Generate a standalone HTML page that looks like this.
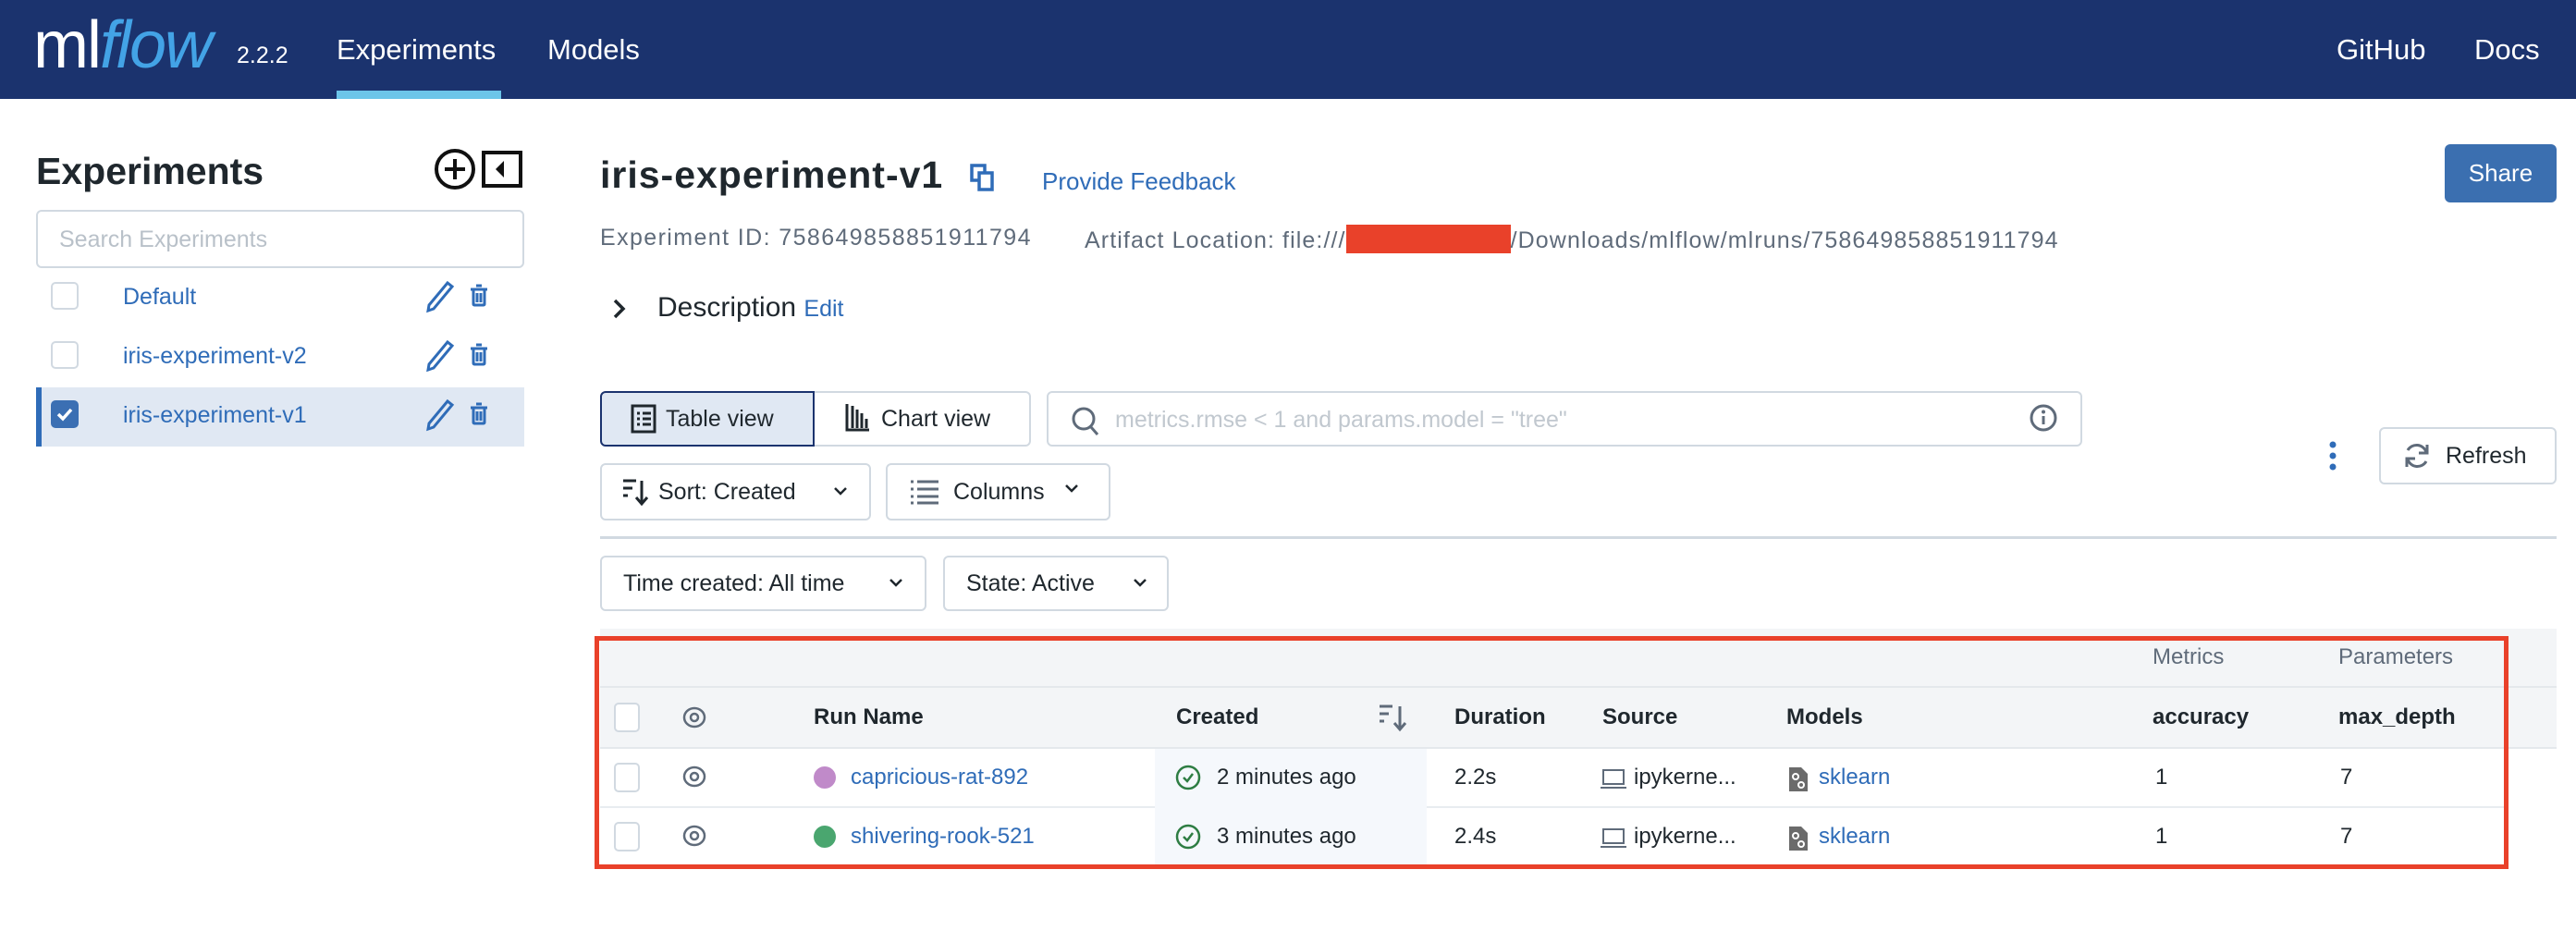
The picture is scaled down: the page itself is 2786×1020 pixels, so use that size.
<!DOCTYPE html>
<html><head><meta charset="utf-8"><style>
*{margin:0;padding:0;box-sizing:border-box}
body{width:2786px;height:1020px;background:#fff;font-family:"Liberation Sans",Arial,sans-serif;position:relative;overflow:hidden;color:#1f272d}
.a{position:absolute;white-space:nowrap}
.hdr{position:absolute;left:0;top:0;width:2786px;height:107px;background:#1b336e}
.nav{color:#fff;font-size:31px;top:36px}
.btn{position:absolute;border:2px solid #d1d9e1;border-radius:6px;background:#fff}
.t25{font-size:25px}
.blue{color:#2f6cb8}
.cb{position:absolute;width:30px;height:30px;border:2px solid #d1d9e1;border-radius:5px;background:#fff}
.cell{font-size:24px;position:absolute}
</style></head><body>
<div class="hdr"></div>
<div class="a" style="left:36px;top:8px;font-size:72px;color:#fff;letter-spacing:-2px">ml<span style="color:#43a3e6;font-style:italic">flow</span></div>
<div class="a" style="left:256px;top:46px;font-size:25px;color:#fff">2.2.2</div>
<div class="a nav" style="left:364px">Experiments</div>
<div class="a" style="left:364px;top:98px;width:178px;height:9px;background:#6cc5e9"></div>
<div class="a nav" style="left:592px">Models</div>
<div class="a nav" style="left:2527px">GitHub</div>
<div class="a nav" style="left:2676px">Docs</div>

<!-- sidebar -->
<div class="a" style="left:39px;top:162px;font-size:41px;font-weight:bold;color:#1f272d">Experiments</div>
<svg class="a" style="left:470px;top:160px" width="100" height="46" viewBox="0 0 100 46"><circle cx="22" cy="23" r="20" fill="none" stroke="#111" stroke-width="4"/><path d="M22 12v22M11 23h22" stroke="#111" stroke-width="4"/><rect x="53" y="5" width="40" height="36" fill="none" stroke="#111" stroke-width="4"/><path d="M75 14l-9 9 9 9z" fill="#111"/></svg>
<div class="btn" style="left:39px;top:227px;width:528px;height:63px"></div>
<div class="a" style="left:64px;top:245px;font-size:25px;color:#b9c1c9">Search Experiments</div>
<div class="a" style="left:39px;top:419px;width:528px;height:64px;background:#e0e8f3;border-left:6px solid #2f6cb8"></div>
<div class="cb" style="left:55px;top:305px"></div>
<div class="cb" style="left:55px;top:369px"></div>
<div class="cb" style="left:55px;top:433px;background:#3b6fb3;border-color:#3b6fb3"><svg width="26" height="26" viewBox="0 0 26 26" style="position:absolute;left:0;top:0"><path d="M6 13l5 5 9-10" fill="none" stroke="#fff" stroke-width="3.5"/></svg></div>
<div class="a t25 blue" style="left:133px;top:307px">Default</div>
<div class="a t25 blue" style="left:133px;top:371px">iris-experiment-v2</div>
<div class="a t25 blue" style="left:133px;top:435px">iris-experiment-v1</div>
<svg class="a" style="left:460px;top:300px" width="80" height="170" viewBox="0 0 80 170">
<g fill="none" stroke="#2f6cb8" stroke-width="3">
<path d="M4 30l20-24 5 4-20 24-6 2z"/><rect x="52" y="13" width="12" height="17" rx="1"/><path d="M49 13h18M55 9h6M56 17v10M60 17v10"/>
<path d="M4 94l20-24 5 4-20 24-6 2z"/><rect x="52" y="77" width="12" height="17" rx="1"/><path d="M49 77h18M55 73h6M56 81v10M60 81v10"/>
<path d="M4 158l20-24 5 4-20 24-6 2z"/><rect x="52" y="141" width="12" height="17" rx="1"/><path d="M49 141h18M55 137h6M56 145v10M60 145v10"/>
</g></svg>

<!-- main header -->
<div class="a" style="left:649px;top:166px;font-size:41px;font-weight:bold;color:#1f272d;letter-spacing:1px">iris-experiment-v1</div>
<svg class="a" style="left:1048px;top:176px" width="30" height="32" viewBox="0 0 30 32"><rect x="3" y="3" width="14" height="16" fill="none" stroke="#2f6cb8" stroke-width="3.5"/><rect x="11" y="11" width="14" height="18" fill="#fff" stroke="#2f6cb8" stroke-width="3.5"/></svg>
<div class="a t25 blue" style="left:1127px;top:181px;font-size:26px">Provide Feedback</div>
<div class="a" style="left:2644px;top:156px;width:121px;height:63px;background:#3b6fb0;border-radius:6px;color:#fff;font-size:26px;text-align:center;line-height:63px">Share</div>
<div class="a" style="left:649px;top:243px;font-size:25px;color:#5f6b7a;letter-spacing:1.4px">Experiment ID: 758649858851911794</div>
<div class="a" style="left:1173px;top:243px;font-size:25px;color:#5f6b7a;letter-spacing:1.1px">Artifact Location: file:///<span style="display:inline-block;width:178px;height:31px;background:#e9412a;vertical-align:-6px"></span>/Downloads/mlflow/mlruns/758649858851911794</div>
<svg class="a" style="left:660px;top:322px" width="20" height="24" viewBox="0 0 20 24"><path d="M5 3l9 9-9 9" fill="none" stroke="#1f272d" stroke-width="3.5"/></svg>
<div class="a" style="left:711px;top:316px;font-size:30px">Description <span class="blue" style="font-size:25px">Edit</span></div>

<!-- toolbar -->
<div class="btn" style="left:649px;top:423px;width:232px;height:60px;background:#e0e8f3;border-color:#1b336e;border-radius:6px 0 0 6px"></div>
<svg class="a" style="left:682px;top:437px" width="28" height="32" viewBox="0 0 28 32"><rect x="2" y="2" width="24" height="28" fill="none" stroke="#1f272d" stroke-width="3"/><path d="M7 10h3M13 10h9M7 16h3M13 16h9M7 22h3M13 22h9" stroke="#1f272d" stroke-width="3"/></svg>
<div class="a t25" style="left:720px;top:439px">Table view</div>
<div class="btn" style="left:881px;top:423px;width:234px;height:60px;border-left:none;border-radius:0 6px 6px 0"></div>
<svg class="a" style="left:914px;top:435px" width="28" height="32" viewBox="0 0 28 32"><path d="M2 2v28h24M8 4v24M13 8v20M18 12v16M23 18v10" fill="none" stroke="#1f272d" stroke-width="3"/></svg>
<div class="a t25" style="left:953px;top:439px">Chart view</div>
<div class="btn" style="left:1132px;top:423px;width:1120px;height:60px"></div>
<svg class="a" style="left:1158px;top:439px" width="32" height="34" viewBox="0 0 32 34"><circle cx="14" cy="14" r="11" fill="none" stroke="#5f6b7a" stroke-width="3"/><path d="M22 23l7 8" stroke="#5f6b7a" stroke-width="3"/></svg>
<div class="a t25" style="left:1206px;top:440px;color:#c1c8cf">metrics.rmse &lt; 1 and params.model = "tree"</div>
<svg class="a" style="left:2194px;top:436px" width="32" height="32" viewBox="0 0 32 32"><circle cx="16" cy="16" r="13" fill="none" stroke="#5f6b7a" stroke-width="3"/><path d="M16 14v9" stroke="#5f6b7a" stroke-width="3"/><circle cx="16" cy="9.5" r="2" fill="#5f6b7a"/></svg>
<svg class="a" style="left:2516px;top:476px" width="14" height="34" viewBox="0 0 14 34"><circle cx="7" cy="5" r="3.5" fill="#2f6cb8"/><circle cx="7" cy="17" r="3.5" fill="#2f6cb8"/><circle cx="7" cy="29" r="3.5" fill="#2f6cb8"/></svg>
<div class="btn" style="left:2573px;top:462px;width:192px;height:62px"></div>
<svg class="a" style="left:2598px;top:477px" width="32" height="32" viewBox="0 0 32 32"><path d="M26 12A11 11 0 0 0 6 10M6 20a11 11 0 0 0 20 2" fill="none" stroke="#5f6b7a" stroke-width="3"/><path d="M27 4v9h-9M5 28v-9h9" fill="none" stroke="#5f6b7a" stroke-width="3"/></svg>
<div class="a t25" style="left:2645px;top:479px">Refresh</div>

<div class="btn" style="left:649px;top:501px;width:293px;height:62px"></div>
<svg class="a" style="left:672px;top:516px" width="32" height="32" viewBox="0 0 32 32"><path d="M2 4h14M2 12h10M2 20h5M22 4v24M16 22l6 7 6-7" fill="none" stroke="#1f272d" stroke-width="3"/></svg>
<div class="a t25" style="left:712px;top:518px">Sort: Created</div>
<svg class="a" style="left:900px;top:525px" width="18" height="14" viewBox="0 0 18 14"><path d="M3 3l6 6 6-6" fill="none" stroke="#1f272d" stroke-width="2.5"/></svg>
<div class="btn" style="left:958px;top:501px;width:243px;height:62px"></div>
<svg class="a" style="left:983px;top:518px" width="34" height="28" viewBox="0 0 34 28"><path d="M2 3h3M9 3h23M2 11h3M9 11h23M2 19h3M9 19h23M2 26h3M9 26h23" stroke="#5f6b7a" stroke-width="3"/></svg>
<div class="a t25" style="left:1031px;top:518px">Columns</div>
<svg class="a" style="left:1150px;top:522px" width="18" height="14" viewBox="0 0 18 14"><path d="M3 3l6 6 6-6" fill="none" stroke="#1f272d" stroke-width="2.5"/></svg>
<div class="a" style="left:649px;top:580px;width:2116px;height:3px;background:#d1d9e1"></div>
<div class="btn" style="left:649px;top:601px;width:353px;height:60px"></div>
<div class="a t25" style="left:674px;top:617px">Time created: All time</div>
<svg class="a" style="left:960px;top:624px" width="18" height="14" viewBox="0 0 18 14"><path d="M3 3l6 6 6-6" fill="none" stroke="#1f272d" stroke-width="2.5"/></svg>
<div class="btn" style="left:1020px;top:601px;width:244px;height:60px"></div>
<div class="a t25" style="left:1045px;top:617px">State: Active</div>
<svg class="a" style="left:1224px;top:624px" width="18" height="14" viewBox="0 0 18 14"><path d="M3 3l6 6 6-6" fill="none" stroke="#1f272d" stroke-width="2.5"/></svg>

<!-- table -->
<div class="a" style="left:649px;top:680px;width:2116px;height:129px;background:#f3f5f7"></div>
<div class="a" style="left:649px;top:742px;width:2116px;height:2px;background:#e4e8ec"></div>
<div class="a" style="left:649px;top:808px;width:2116px;height:2px;background:#e4e8ec"></div>
<div class="a" style="left:649px;top:872px;width:2060px;height:2px;background:#e8ecf0"></div>
<div class="a" style="left:1249px;top:810px;width:294px;height:126px;background:#f5f8fc"></div>
<div class="cell" style="left:2328px;top:697px;color:#5f6b7a">Metrics</div>
<div class="cell" style="left:2529px;top:697px;color:#5f6b7a">Parameters</div>
<div class="cb" style="left:664px;top:760px;width:28px;height:32px"></div>
<div class="cb" style="left:664px;top:825px;width:28px;height:32px"></div>
<div class="cb" style="left:664px;top:889px;width:28px;height:32px"></div>
<svg class="a" style="left:736px;top:760px" width="30" height="170" viewBox="0 0 30 170"><g fill="none" stroke="#5f6b7a" stroke-width="2.5"><ellipse cx="15" cy="16" rx="11" ry="10"/><circle cx="15" cy="16" r="4"/><ellipse cx="15" cy="80" rx="11" ry="10"/><circle cx="15" cy="80" r="4"/><ellipse cx="15" cy="144" rx="11" ry="10"/><circle cx="15" cy="144" r="4"/></g></svg>
<div class="cell" style="left:880px;top:762px;font-weight:bold;color:#1f272d">Run Name</div>
<div class="cell" style="left:1272px;top:762px;font-weight:bold">Created</div>
<svg class="a" style="left:1490px;top:760px" width="34" height="34" viewBox="0 0 34 34"><path d="M2 4h14M2 12h10M2 20h5M24 4v24M18 22l6 7 6-7" fill="none" stroke="#5f6b7a" stroke-width="3"/></svg>
<div class="cell" style="left:1573px;top:762px;font-weight:bold">Duration</div>
<div class="cell" style="left:1733px;top:762px;font-weight:bold">Source</div>
<div class="cell" style="left:1932px;top:762px;font-weight:bold">Models</div>
<div class="cell" style="left:2328px;top:762px;font-weight:bold">accuracy</div>
<div class="cell" style="left:2529px;top:762px;font-weight:bold">max_depth</div>

<div class="a" style="left:880px;top:829px;width:24px;height:24px;border-radius:50%;background:#c08ac9"></div>
<div class="a" style="left:880px;top:893px;width:24px;height:24px;border-radius:50%;background:#4aa66f"></div>
<div class="cell blue" style="left:920px;top:827px">capricious-rat-892</div>
<div class="cell blue" style="left:920px;top:891px">shivering-rook-521</div>
<svg class="a" style="left:1271px;top:825px" width="30" height="100" viewBox="0 0 30 100"><g fill="none" stroke="#2e7d43" stroke-width="2.5"><circle cx="14" cy="16" r="12"/><path d="M9 16l4 4 6-8"/><circle cx="14" cy="80" r="12"/><path d="M9 80l4 4 6-8"/></g></svg>
<div class="cell" style="left:1316px;top:827px">2 minutes ago</div>
<div class="cell" style="left:1316px;top:891px">3 minutes ago</div>
<div class="cell" style="left:1573px;top:827px">2.2s</div>
<div class="cell" style="left:1573px;top:891px">2.4s</div>
<svg class="a" style="left:1731px;top:830px" width="28" height="90" viewBox="0 0 28 90"><g fill="none" stroke="#5f6b7a" stroke-width="2"><rect x="3" y="3" width="22" height="15"/><path d="M0 22h28"/><rect x="3" y="67" width="22" height="15"/><path d="M0 86h28"/></g></svg>
<div class="cell" style="left:1767px;top:827px">ipykerne...</div>
<div class="cell" style="left:1767px;top:891px">ipykerne...</div>
<svg class="a" style="left:1933px;top:828px" width="24" height="92" viewBox="0 0 24 92"><g><path d="M2 2h13l7 7v19H2z" fill="#6b6b6b"/><circle cx="9" cy="12" r="3" fill="none" stroke="#fff" stroke-width="2"/><circle cx="15" cy="21" r="3" fill="none" stroke="#fff" stroke-width="2"/><path d="M2 66h13l7 7v19H2z" fill="#6b6b6b"/><circle cx="9" cy="76" r="3" fill="none" stroke="#fff" stroke-width="2"/><circle cx="15" cy="85" r="3" fill="none" stroke="#fff" stroke-width="2"/></g></svg>
<div class="cell blue" style="left:1967px;top:827px">sklearn</div>
<div class="cell blue" style="left:1967px;top:891px">sklearn</div>
<div class="cell" style="left:2331px;top:827px">1</div>
<div class="cell" style="left:2331px;top:891px">1</div>
<div class="cell" style="left:2531px;top:827px">7</div>
<div class="cell" style="left:2531px;top:891px">7</div>
<div class="a" style="left:643px;top:688px;width:2070px;height:252px;border:5px solid #e9412a"></div>
</body></html>
